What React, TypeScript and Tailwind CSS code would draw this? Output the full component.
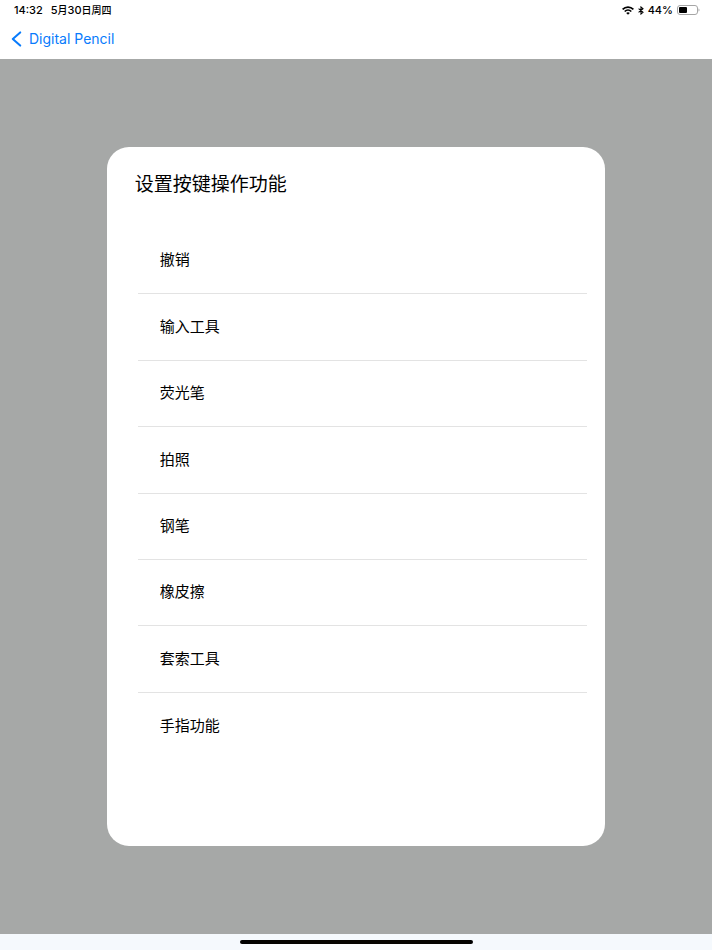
const actions = ["撤销", "输入工具", "荧光笔", "拍照", "钢笔", "橡皮擦", "套索工具", "手指功能"];

function StatusBar() {
  return (
    <div className="flex h-5 items-center justify-between pl-3.5 pr-3 text-[11px] font-medium leading-5">
      <div className="flex gap-2">
        <span>14:32</span>
        <span>
          5<span className="text-[10px]">月</span>30<span className="text-[10px]">日周四</span>
        </span>
      </div>
      <div className="flex items-center gap-1">
        <svg width="12" height="9" viewBox="0 0 12 9" fill="none" stroke="#000" strokeWidth="1.7">
          <path d="M0.6 3.4C3.6 0.4 8.4 0.4 11.4 3.4" />
          <path d="M2.7 5.5C4.6 3.7 7.4 3.7 9.3 5.5" />
          <path d="M6 8.8L4.2 7C5.2 6 6.8 6 7.8 7Z" fill="#000" stroke="none" />
        </svg>
        <svg width="6" height="9" viewBox="0 0 6 9" fill="none" stroke="#000" strokeWidth="1.1">
          <path d="M0.6 2.6L5 6.3L3 8V1L5 2.7L0.6 6.4" />
        </svg>
        <span>44%</span>
        <svg width="23" height="10" viewBox="0 0 23 10">
          <rect x="0.5" y="0.5" width="20" height="9" rx="2.5" fill="#fff" stroke="#a6a6a6" />
          <rect x="2" y="2" width="8" height="6" rx="1" fill="#000" />
          <path d="M21.5 3.5C22.8 4 22.8 6 21.5 6.5Z" fill="#a6a6a6" />
        </svg>
      </div>
    </div>
  );
}

export default function App() {
  return (
    <div className="flex min-h-screen flex-col bg-white font-['Inter','Noto_Sans_CJK_SC',sans-serif] text-black">
      {/* Header */}
      <header className="h-[59px] shrink-0">
        <StatusBar />
        <nav className="flex h-[38px] items-center pl-[11px]">
          <a href="#" className="flex items-center gap-[7px] text-sm text-[#087bfc]">
            <svg width="11" height="16" viewBox="0 0 11 16" fill="none" stroke="currentColor" strokeWidth="2" strokeLinecap="round" strokeLinejoin="round">
              <path d="M9.2 1.4L1.8 8L9.2 14.6" />
            </svg>
            Digital Pencil
          </a>
        </nav>
      </header>

      {/* Button action dialog */}
      <main className="flex flex-1 justify-center bg-[#a6a8a7] py-[88px]">
        <section className="flex w-[70%] flex-col rounded-[22px] bg-white pb-[87px] pl-[31px] pr-[18px]">
          <h1 className="-ml-[3px] h-[81px] pt-[25px] text-[19px] leading-[26px]">设置按键操作功能</h1>
          <ul className="grid flex-1 auto-rows-fr divide-y divide-[#e3e3e3]">
            {actions.map((action) => (
              <li key={action} className="flex">
                <button type="button" className="min-h-12 flex-1 px-[22px] text-left text-[15px]">
                  {action}
                </button>
              </li>
            ))}
          </ul>
        </section>
      </main>

      {/* Home indicator */}
      <footer className="flex h-4 shrink-0 items-center justify-center bg-[#f5f9fd]">
        <div className="h-1 w-[233px] rounded-full bg-black" />
      </footer>
    </div>
  );
}
